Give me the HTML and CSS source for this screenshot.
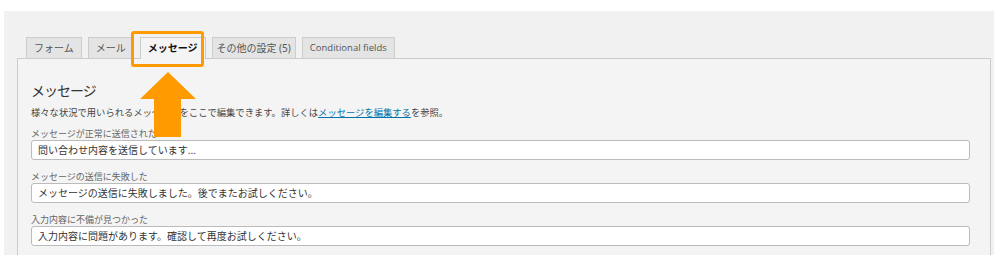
FILE: index.html
```html
<!DOCTYPE html>
<html>
<head>
  <title>メッセージ設定</title>
  <link rel="stylesheet" href="styles.css">
</head>
<body>
  <div class="screen">
    <div class="tabs">
      <span class="tab">フォーム</span>
      <span class="tab">メール</span>
      <span class="tab active">メッセージ</span>
      <span class="tab tight">その他の設定<span class="num"> (5)</span></span>
      <span class="tab latin">Conditional fields</span>
    </div>

    <div class="panel">
      <h2>メッセージ</h2>
      <p class="desc">様々な状況で用いられるメッセージをここで編集できます。詳しくは<a href="#">メッセージを編集する</a>を参照。</p>

      <div class="field first">
        <label>メッセージが正常に送信された</label>
        <div class="input">問い合わせ内容を送信しています...</div>
      </div>
      <div class="field">
        <label>メッセージの送信に失敗した</label>
        <div class="input">メッセージの送信に失敗しました。後でまたお試しください。</div>
      </div>
      <div class="field">
        <label>入力内容に不備が見つかった</label>
        <div class="input">入力内容に問題があります。確認して再度お試しください。</div>
      </div>
    </div>

    <!-- highlight over the active tab -->
    <div class="highlight"></div>
    <svg class="arrow" width="56" height="65" viewBox="0 0 56 65">
      <polygon points="28,0 56,27 41,27 41,65 14,65 14,27 0,27" fill="#ff9a00"/>
    </svg>
  </div>
</body>
</html>
```

FILE: styles.css
```css
body {
  margin: 0;
  background: #fff;
  font-family: "Noto Sans CJK JP", "Noto Sans", sans-serif;
  color: #444;
}

.screen {
  position: relative;
  margin: 11px 6px 0 4px;
  height: 244px;
  padding: 26px 0 0 13px;
  box-sizing: border-box;
  background: #f1f1f1;
  overflow: hidden;
}

.tabs {
  display: flex;
  padding-left: 9px;
  height: 21px;
}

.tab {
  margin-right: 6px;
  padding: 0 7px;
  height: 21px;
  line-height: 20px;
  font-size: 10px;
  color: #555;
  background: #e4e4e4;
  border: 1px solid #ccc;
  border-bottom: none;
  box-sizing: border-box;
  white-space: pre;
}

.tab.tight {
  padding: 0 4px;
}

.tab .num {
  font-family: "Noto Sans", sans-serif;
}

.tab.latin {
  font-family: "Open Sans", "Noto Sans", sans-serif;
  font-size: 9.5px;
}

.tab.active {
  background: #f4f4f4;
  color: #111;
  font-weight: bold;
  height: 22px;
  position: relative;
  z-index: 1;
}

.panel {
  margin-right: 3px;
  padding: 22px 20px 0 13px;
  height: 300px;
  background: #f4f4f4;
  border: 1px solid #ccc;
}

.panel h2 {
  margin: 0;
  font-size: 14px;
  line-height: 19px;
  letter-spacing: -1px;
  font-weight: normal;
  color: #333;
}

.desc {
  margin: 5px 0 0;
  font-size: 9.3px;
  line-height: 14px;
}

.desc a {
  color: #0073aa;
}

.field {
  margin-top: 10px;
}

.field.first {
  margin-top: 8px;
}

.field label {
  display: block;
  font-size: 9px;
  line-height: 13px;
  color: #666;
}

.input {
  height: 20px;
  line-height: 18px;
  padding: 0 6px;
  box-sizing: border-box;
  font-size: 10px;
  color: #333;
  background: #fff;
  border: 1px solid #bbb;
  border-radius: 3px;
}

.highlight {
  position: absolute;
  left: 127px;
  top: 20px;
  width: 73px;
  height: 36px;
  border: 3px solid #ff9a00;
  border-radius: 3px;
  box-sizing: border-box;
  z-index: 2;
}

.arrow {
  position: absolute;
  left: 136px;
  top: 61px;
  z-index: 2;
}
```
